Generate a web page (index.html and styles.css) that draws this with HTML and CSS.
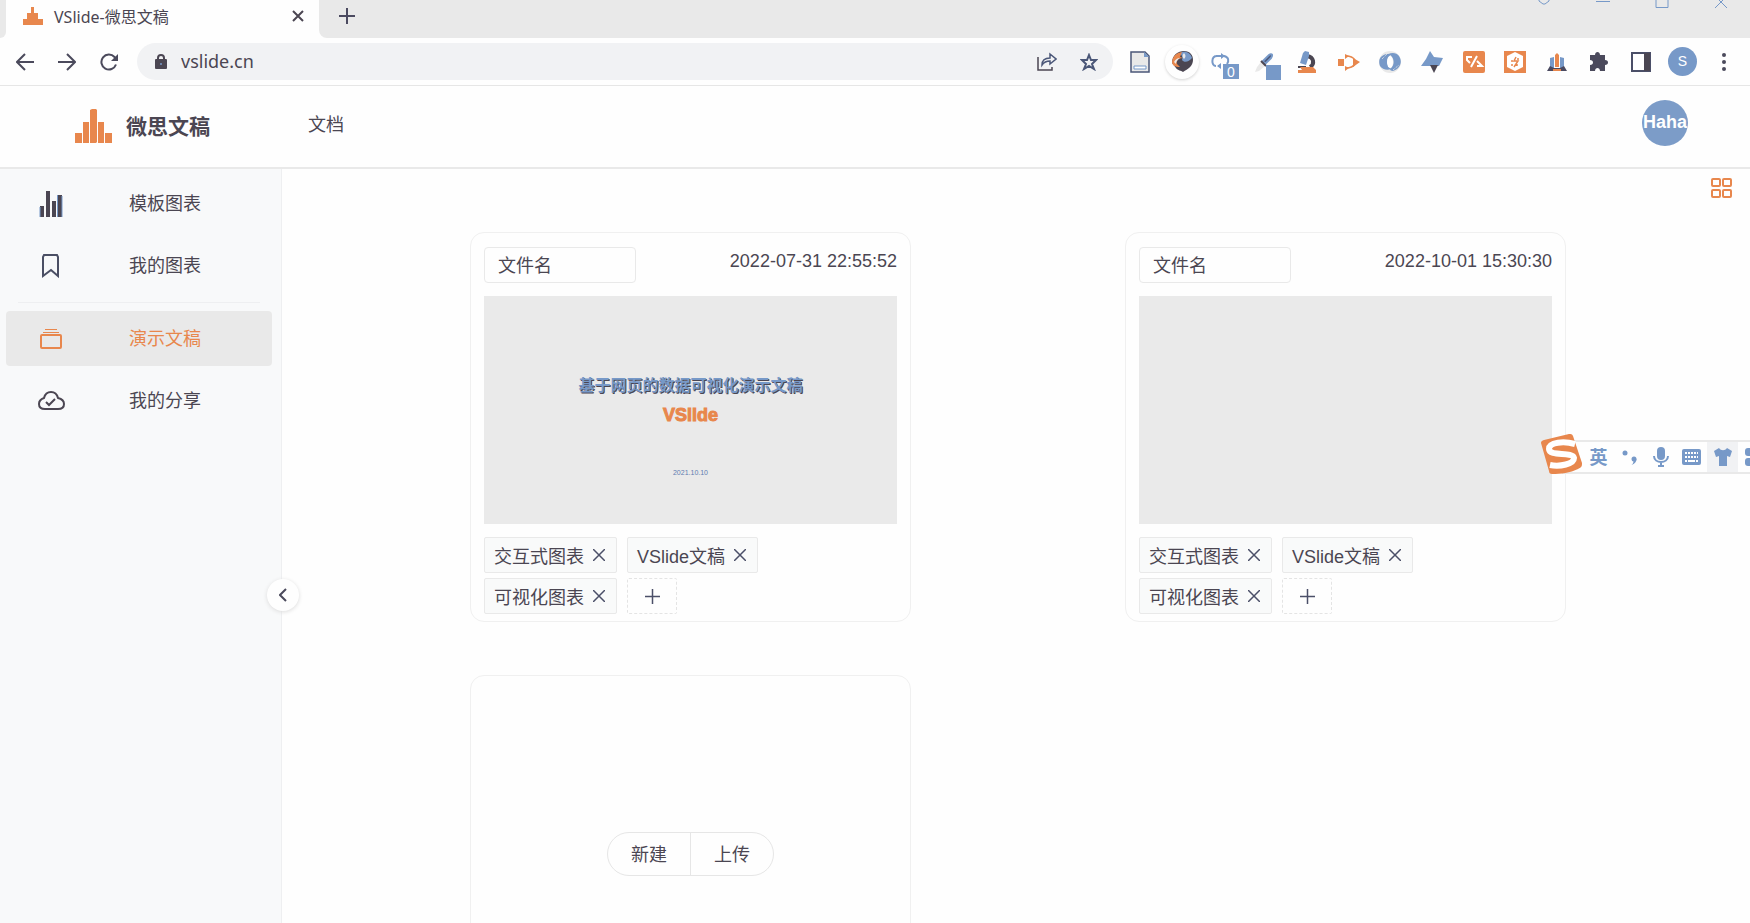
FILE: index.html
```html
<!DOCTYPE html>
<html lang="zh-CN">
  <head>
    <meta charset="UTF-8" />
    <meta name="viewport" content="width=device-width, initial-scale=1.0" />
    <title>VSlide-微思文稿</title>
    <link rel="stylesheet" href="styles.css">
  </head>
  <body>
    <!-- browser bar -->
    <div class="browser">
      <div class="tab-strip">
        <div class="strip-left"></div>
        <div class="tab">
          <svg class="tab-icon" width="20" height="18" viewBox="0 0 20 18" fill="#e8874d">
            <path d="M0 12h4V6h4V0h3v6h4v6h5v6H0z" />
          </svg>
          <span class="tab-title">VSlide-微思文稿</span>
          <button class="icon-button" aria-label="关闭标签页">
            <svg width="12" height="12" viewBox="0 0 12 12" fill="none" stroke="#4b4652" stroke-width="2"><path d="M1 1l10 10M11 1L1 11" /></svg>
          </button>
        </div>
        <div class="strip-right">
          <button class="icon-button" aria-label="新标签页">
            <svg width="16" height="16" viewBox="0 0 16 16" fill="none" stroke="#4b4a60" stroke-width="2"><path d="M8 0v16M0 8h16" /></svg>
          </button>
          <div class="window-controls">
            <button class="icon-button" aria-label="搜索标签页">
              <svg width="14" height="8" viewBox="0 0 14 8" fill="none" stroke="#7799c8"><path d="M2 0v1l4 3h2l4-3V0" /></svg>
            </button>
            <button class="icon-button" aria-label="最小化">
              <svg width="14" height="8" viewBox="0 0 14 8" fill="none" stroke="#7799c8"><path d="M0 1.500h14" /></svg>
            </button>
            <button class="icon-button" aria-label="最大化">
              <svg width="14" height="8" viewBox="0 0 14 8" fill="none" stroke="#7799c8"><path d="M1 0v7.500h12V0" /></svg>
            </button>
            <button class="icon-button" aria-label="关闭">
              <svg width="14" height="8" viewBox="0 0 14 8" fill="none" stroke="#7799c8"><path d="M5 0l8 8M9 0L1 8" /></svg>
            </button>
          </div>
        </div>
      </div>

      <div class="toolbar">
        <div class="nav-buttons">
          <button class="icon-button" aria-label="后退">
            <svg width="18" height="18" viewBox="0 0 18 18" fill="none" stroke="#4b4a5c" stroke-width="2"><path d="M18 9H2M9 1L1 9l8 8" /></svg>
          </button>
          <button class="icon-button" aria-label="前进">
            <svg width="18" height="18" viewBox="0 0 18 18" fill="none" stroke="#4b4a5c" stroke-width="2"><path d="M0 9h16M9 1l8 8-8 8" /></svg>
          </button>
          <button class="icon-button" aria-label="刷新">
            <svg width="18" height="18" viewBox="0 0 18 18" fill="none" stroke="#4b4a5c" stroke-width="2"><path d="M16 11.500A7.500 7.500 0 1 1 14.500 4L17 6.500" /><path d="M18 1v7h-7z" fill="#4b4a5c" stroke="none" /></svg>
          </button>
        </div>

        <div class="address">
          <svg width="12" height="15" viewBox="0 0 12 15"><path d="M3 6V4a3 3 0 0 1 6 0v2" fill="none" stroke="#4b4652" stroke-width="2" /><rect y="5" width="12" height="10" rx="1" fill="#4b4652" /><circle cx="6" cy="10" r="1" fill="#7799c8" /></svg>
          <input class="address-input" type="text" value="vslide.cn" aria-label="地址" />
          <button class="icon-button" aria-label="分享">
            <svg width="20" height="19" viewBox="0 0 20 19" fill="none" stroke="#4b4652" stroke-width="1.500"><path d="M1 5v13h14v-3" /><path d="M5 13c0-5 3-7 8-7V2l6 5-6 5V9c-4 0-6 1-8 4z" stroke="#4b5778" /></svg>
          </button>
          <button class="icon-button" aria-label="收藏">
            <svg width="18" height="18" viewBox="0 0 18 18" fill="none" stroke="#4b5778" stroke-width="2"><path d="M9 2l2 5h5l-4 4 2 5-5-3-5 3 2-5-4-4h5z" /></svg>
          </button>
        </div>

        <div class="extensions">
          <button class="icon-button" aria-label="阅读">
            <svg width="20" height="22" viewBox="0 0 20 22"><path d="M1 1h14l4 4v16H1z" fill="#e9e9e9" stroke="#4b5778" stroke-width="1.500" /><path d="M4 15h12v3H4z" fill="#fff" stroke="#7799c8" /><path d="M14 1l5 5h-5z" fill="#7799c8" /></svg>
          </button>
          <button class="icon-button round" aria-label="球">
            <svg width="22" height="21" viewBox="0 0 22 21"><path d="M1 12C1 4 7 0 13 0c6 0 9 4 9 9 0 6-5 9-10 12-2-2-5-1-7-4z" fill="#4b4652" /><path d="M9 2c5-3 11 0 12 5-3 4-8 5-10 2 1-3 0-4-2-7z" fill="#7799c8" /><path d="M1 11c1-7 5-9 10-10L9 6l3 1c-5 0-7 3-6 6l3 3c-5 0-8-2-8-5z" fill="#e8874d" /><path d="M13 2c2 2 2 4 0 6-2-2-2-4 0-6zM3 11c1-2 3-4 6-4-3 2-4 4-4 6z" fill="#e9e9e9" /></svg>
          </button>
          <button class="icon-button" aria-label="循环">
            <svg width="36" height="36" viewBox="-6 -8 36 36"><path d="M6 4C0 4 0 14 5 14M5 4h8c5 1 5 5 3 8M7 14h3" fill="none" stroke="#7799c8" stroke-width="2" /><path d="M10 1v6l4-3zM10 11v6l-4-3z" fill="#7799c8" /><path d="M12 12h16v15H12z" fill="#7799c8" /><text x="20" y="25" text-anchor="middle" font-size="14" fill="#fff">0</text></svg>
          </button>
          <button class="icon-button" aria-label="取色">
            <svg width="34" height="36" viewBox="-6 -8 34 36"><path d="M9 9l6-6c3-2 4 0 2 3l-6 6z" fill="#4b5778" stroke="#7799c8" stroke-width="2" /><path d="M7 10l4 4-6 5-4 1 2-5z" fill="#e9e9e9" /><path d="M7 9l5 5" stroke="#4b4652" stroke-width="2" /><path d="M12 13h15v15H12z" fill="#7799c8" /></svg>
          </button>
          <button class="icon-button" aria-label="显微镜">
            <svg width="20" height="22" viewBox="0 0 20 22"><path d="M10 5c7 1 8 8 3 11" fill="none" stroke="#4b4652" stroke-width="4" /><path d="M6 2l2-2 4 1v4L9 14 3 12z" fill="#7799c8" /><path d="M1 15h8v2H1z" fill="#4b4652" /><path d="M3 16h13l3 3v3H1v-3h4z" fill="#e8874d" /></svg>
          </button>
          <button class="icon-button" aria-label="流程">
            <svg width="22" height="18" viewBox="0 0 22 18"><path d="M0 6h6v7H0zM15 5l7 4-7 5zM7 1l4 2-4 3zM7 13l4 2-4 3z" fill="#e8874d" /><path d="M8 3c4 0 7 1 9 4M8 15c4 0 7-1 9-4" fill="none" stroke="#e8874d" stroke-width="1.500" /></svg>
          </button>
          <button class="icon-button" aria-label="代理">
            <svg width="22" height="22" viewBox="0 0 22 22"><circle cx="11" cy="11" r="11" fill="#e9e9e9" /><path d="M1 15C-2 7 4 2 13 3c-5 2-7 10-1 15-4 2-9 0-11-3z" fill="#7799c8" /><path d="M20 5c4 6 1 13-6 15-2 0-3-1-3-2 5-4 5-11-1-15 3-2 8-1 10 2z" fill="#7799c8" /><path d="M3 8l5-5M14 19l6-5" stroke="#e9e9e9" stroke-dasharray="1 1" /><ellipse cx="11" cy="11" rx="3" ry="6" fill="#fff" /></svg>
          </button>
          <button class="icon-button" aria-label="星标">
            <svg width="22" height="22" viewBox="0 0 22 22"><path d="M9 0l4 6 9 1-4 8H0l5-7z" fill="#7799c8" /><path d="M9 14h8l-4 8z" fill="#4b4652" /></svg>
          </button>
          <button class="icon-button" aria-label="代码">
            <svg width="22" height="22" viewBox="0 0 22 22"><rect width="22" height="22" rx="2" fill="#e8874d" /><path d="M9 6H4v3l3 3M14 5L8 16M14 10l5 5h-5" fill="none" stroke="#fff" stroke-width="2" /></svg>
          </button>
          <button class="icon-button" aria-label="六边形">
            <svg width="22" height="22" viewBox="0 0 22 22"><path d="M0 0h22v22H0z" fill="#e8874d" /><path d="M11 1l8 4v11l-8 4-8-4V5z" fill="#fff" /><path d="M12 6l-2 4h4l-4 6M8 9v2M8 13v2M14 7v2M13 13v2" fill="none" stroke="#e8874d" stroke-width="1.500" /></svg>
          </button>
          <button class="icon-button" aria-label="图表">
            <svg width="20" height="18" viewBox="0 0 20 18"><path d="M3 5l4-1v12H3zM13 4l4 1v11h-4z" fill="#7799c8" /><path d="M0 18l3-5 4 2h6l4-2 3 5z" fill="#4b4a60" /><path d="M8 2l2-2 2 2v12H8zM6 16h8v2H6z" fill="#e8874d" /></svg>
          </button>
          <button class="icon-button" aria-label="扩展程序">
            <svg width="20" height="20" viewBox="0 0 20 20"><path d="M1 3h5c0-4 5-4 5 0h5v5c4 0 4 5 0 5v6h-5c0-4-5-4-5 0H1v-6c4 0 4-5 0-5z" fill="#4b4a5c" /></svg>
          </button>
          <button class="icon-button" aria-label="侧边栏">
            <svg width="20" height="20" viewBox="0 0 20 20"><path d="M1 1h18v18H1z" fill="#fff" stroke="#4b4f68" stroke-width="2" /><path d="M13 1h6v18h-6z" fill="#4b4652" /></svg>
          </button>
          <button class="icon-button" aria-label="账户">
            <span class="account">S</span>
          </button>
          <button class="icon-button" aria-label="菜单">
            <svg width="4" height="18" viewBox="0 0 4 18" fill="#4b4a5c"><circle cx="2" cy="2" r="2" /><circle cx="2" cy="9" r="2" /><circle cx="2" cy="16" r="2" /></svg>
          </button>
        </div>
      </div>
    </div>

    <header class="header">
      <a class="brand" href="#">
        <svg width="37" height="34" viewBox="0 0 37 34" fill="#e8874d"><path d="M0 24h7v10H0zM8 13h6v21H8zM15 1l2-1h4l1 1v32l-1 1h-6zM23 13h6v21h-6zM30 24h7v10h-7z" /></svg>
        <span>微思文稿</span>
      </a>
      <a class="header-link" href="#">文档</a>
      <button class="avatar">Haha</button>
    </header>

    <div class="layout">
      <nav class="sidebar">
        <a class="side-item" href="#">
          <svg width="28" height="26" viewBox="0 0 28 26" fill="#4b4652"><path d="M3 15h4v11H3zM9 0h4v26H9zM15 10h4v16h-4zM21 4h4v22h-4z" /><path d="M3 16v10M20.500 4v22M25 5v21" stroke="#7799c8" /></svg>
          <span>模板图表</span>
        </a>
        <a class="side-item" href="#">
          <svg width="28" height="24" viewBox="0 0 28 24" fill="none" stroke="#4b4f64" stroke-width="2"><path d="M6 22V3l1-2h13l1 2v19l-7-6z" /></svg>
          <span>我的图表</span>
        </a>
        <hr class="side-line" />
        <a class="side-item active" href="#">
          <svg width="28" height="20" viewBox="0 0 28 20" fill="none" stroke="#e8874d" stroke-width="2"><path d="M8 .500h12M6 3.500h16" stroke-width="1" /><rect x="4" y="6" width="20" height="13" rx="1" /></svg>
          <span>演示文稿</span>
        </a>
        <a class="side-item" href="#">
          <svg width="28" height="20" viewBox="0 0 28 20" fill="none" stroke="#4b4652" stroke-width="2"><path d="M8 18C3 18 2 16 2 13c0-3 2-5 5-6 1-4 4-6 7-6s6 2 7 6c4 1 6 3 6 6 0 3-2 5-6 5z" /><path d="M9 11l3 3 6-6" /></svg>
          <span>我的分享</span>
        </a>
        <button class="collapse" aria-label="收起">
          <svg width="8" height="14" viewBox="0 0 8 14" fill="none" stroke="#4b4a5c" stroke-width="2"><path d="M7 1L1 7l6 6" /></svg>
        </button>
      </nav>

      <main class="main">
        <div class="view-bar">
          <button class="icon-button" aria-label="网格视图">
            <svg width="21" height="20" viewBox="0 0 21 20" fill="none" stroke="#e8874d" stroke-width="2"><rect x="1" y="1" width="8" height="7" rx="1" /><rect x="12" y="1" width="8" height="7" rx="1" /><rect x="1" y="12" width="8" height="7" rx="1" /><rect x="12" y="12" width="8" height="7" rx="1" /></svg>
          </button>
        </div>

        <div class="cards">
          <section class="card">
            <div class="card-head">
              <input class="file-name" type="text" value="文件名" aria-label="文件名" />
              <time>2022-07-31 22:55:52</time>
            </div>
            <div class="preview">
              <h2>基于网页的数据可视化演示文稿</h2>
              <p class="preview-name">VSlide</p>
              <p class="preview-date">2021.10.10</p>
            </div>
            <div class="tags">
              <span class="tag">交互式图表<button class="icon-button" aria-label="删除"><svg width="12" height="12" viewBox="0 0 12 12"><path d="M0 0l12 12M12 0L0 12" /></svg></button></span>
              <span class="tag">VSlide文稿<button class="icon-button" aria-label="删除"><svg width="12" height="12" viewBox="0 0 12 12"><path d="M0 0l12 12M12 0L0 12" /></svg></button></span>
              <span class="tag">可视化图表<button class="icon-button" aria-label="删除"><svg width="12" height="12" viewBox="0 0 12 12"><path d="M0 0l12 12M12 0L0 12" /></svg></button></span>
              <button class="tag-add" aria-label="添加标签"><svg width="15" height="15" viewBox="0 0 15 15"><path d="M7.500 0v15M0 7.500h15" /></svg></button>
            </div>
          </section>

          <section class="card">
            <div class="card-head">
              <input class="file-name" type="text" value="文件名" aria-label="文件名" />
              <time>2022-10-01 15:30:30</time>
            </div>
            <div class="preview"></div>
            <div class="tags">
              <span class="tag">交互式图表<button class="icon-button" aria-label="删除"><svg width="12" height="12" viewBox="0 0 12 12"><path d="M0 0l12 12M12 0L0 12" /></svg></button></span>
              <span class="tag">VSlide文稿<button class="icon-button" aria-label="删除"><svg width="12" height="12" viewBox="0 0 12 12"><path d="M0 0l12 12M12 0L0 12" /></svg></button></span>
              <span class="tag">可视化图表<button class="icon-button" aria-label="删除"><svg width="12" height="12" viewBox="0 0 12 12"><path d="M0 0l12 12M12 0L0 12" /></svg></button></span>
              <button class="tag-add" aria-label="添加标签"><svg width="15" height="15" viewBox="0 0 15 15"><path d="M7.500 0v15M0 7.500h15" /></svg></button>
            </div>
          </section>

          <section class="card card-new">
            <div class="button-group">
              <button>新建</button>
              <button>上传</button>
            </div>
          </section>
        </div>
      </main>
    </div>

    <!-- input method bar -->
    <div class="ime">
      <svg class="ime-logo" width="41" height="40" viewBox="0 0 41 40"><path d="M0 9c0-2 1-2 3-3l25-6c2 0 3 0 4 2l9 27c0 3 0 4-4 6-8 4-17 5-26 5-2 0-3-1-3-3z" fill="#e8874d" /><path d="M34 10C23 7 8 8 8 15c0 8 24 2 25 9 0 6-14 9-24 7" fill="none" stroke="#fff" stroke-width="6" /></svg>
      <div class="ime-keys">
        <button class="ime-lang">英</button>
        <button aria-label="标点"><svg width="16" height="16" viewBox="0 0 16 16" fill="#7799c8"><circle cx="3" cy="4" r="2.500" /><circle cx="12" cy="10" r="2.500" /><path d="M14.500 10c0 3-2 5-5 6 1-1 2-2 2-4z" /></svg></button>
        <button aria-label="语音"><svg width="16" height="20" viewBox="0 0 16 20"><rect x="4" width="8" height="13" rx="4" fill="#7799c8" /><path d="M1 9c0 8 14 8 14 0M8 15v4M5 19h6" fill="none" stroke="#7799c8" stroke-width="2" /></svg></button>
        <button aria-label="键盘"><svg width="19" height="16" viewBox="0 0 19 16"><rect width="19" height="16" rx="2" fill="#7799c8" /><path d="M3 4h13M3 8h13" stroke="#fff" stroke-width="2" stroke-dasharray="2 1" /><path d="M3 12h2M6 12h7M14 12h2" stroke="#fff" stroke-width="2" /></svg></button>
        <button class="ime-skin" aria-label="皮肤"><svg width="18" height="18" viewBox="0 0 18 18" fill="#7799c8"><path d="M5 0c2 3 6 3 8 0l5 3-2 6-3-1v10H5V8L2 9 0 3z" /></svg></button>
        <button aria-label="工具"><svg width="18" height="18" viewBox="0 0 18 18" fill="#7799c8"><rect width="8" height="8" rx="3" /><rect x="10" width="8" height="8" rx="3" /><rect y="10" width="8" height="8" rx="3" /><rect x="10" y="10" width="8" height="8" rx="3" /></svg></button>
      </div>
    </div>
  </body>
</html>
```

FILE: styles.css
```css
* {
  box-sizing: border-box;
}

body {
  margin: 0;
  height: 100vh;
  display: flex;
  flex-direction: column;
  overflow: hidden;
  background-color: #fefefe;
  color: #4b4652;
  font-family: "Liberation Sans", "Noto Sans CJK SC", sans-serif;
  font-size: 18px;
}

a {
  color: inherit;
  text-decoration: none;
}

button,
input {
  margin: 0;
  padding: 0;
  border: none;
  background: none;
  color: inherit;
  font: inherit;
}

svg {
  display: block;
}

.icon-button {
  display: flex;
  align-items: center;
  justify-content: center;
}

/* browser bar */
.browser {
  border-bottom: 1px solid #e6e6e6;
}

.tab-strip {
  display: flex;
  height: 38px;
}

.strip-left {
  width: 6px;
  background-color: #e9e9e9;
  border-bottom-right-radius: 6px;
}

.tab {
  display: flex;
  align-items: center;
  width: 313px;
  padding: 0 15px 6px 17px;
  font-family: "Noto Sans", "Noto Sans CJK SC", sans-serif;
  font-size: 16px;
}

.tab-title {
  flex: 1;
  padding-left: 11px;
}

.strip-right {
  flex: 1;
  display: flex;
  justify-content: space-between;
  padding-left: 20px;
  background-color: #e9e9e9;
  border-bottom-left-radius: 8px;
}

.strip-right > .icon-button {
  padding-bottom: 6px;
}

.window-controls {
  display: flex;
  align-items: flex-start;
}

.window-controls .icon-button {
  width: 59px;
}

.toolbar {
  display: flex;
  align-items: center;
  height: 47px;
  padding: 0 5px 0 4px;
}

.nav-buttons {
  display: flex;
}

.nav-buttons .icon-button {
  width: 42px;
  height: 36px;
}

.address {
  flex: 1;
  display: flex;
  align-items: center;
  height: 37px;
  margin: 0 6px 0 7px;
  padding: 0 3px 0 18px;
  border-radius: 20px;
  background-color: #f1f2f4;
}

.address-input {
  flex: 1;
  min-width: 0;
  padding: 0 0 2px 14px;
  font-family: "Noto Sans", "Noto Sans CJK SC", sans-serif;
}

.address .icon-button {
  width: 42px;
}

.extensions {
  display: grid;
  grid-template-columns: repeat(15, 1fr);
  align-items: center;
  justify-items: center;
  width: 626px;
}

.round {
  width: 34px;
  height: 34px;
  border-radius: 50%;
  box-shadow: 0 1px 3px #d4d4d4;
}

.account {
  width: 29px;
  height: 29px;
  border-radius: 50%;
  background-color: #7799c8;
  color: #fff;
  font-size: 14px;
  line-height: 29px;
}

/* header */
.header {
  display: flex;
  align-items: center;
  height: 83px;
  padding: 0 62px 8px 75px;
  border-bottom: 2px solid #e9e9e9;
}

.brand {
  display: flex;
  align-items: center;
  gap: 14px;
  padding-top: 7px;
  font-size: 21px;
  font-weight: bold;
}

.brand span {
  padding-bottom: 3px;
}

.header-link {
  flex: 1;
  margin-left: 98px;
}

.avatar {
  width: 46px;
  height: 46px;
  border-radius: 50%;
  background-color: #7c9cc8;
  color: #fff;
  font-size: 18px;
  font-weight: bold;
}

/* layout */
.layout {
  flex: 1;
  display: flex;
  min-height: 0;
}

.sidebar {
  position: relative;
  width: 282px;
  padding: 7px 9px 0 6px;
  background-color: #f8f9fa;
  border-right: 1px solid #eeeff1;
}

.side-item {
  display: flex;
  align-items: center;
  gap: 64px;
  height: 55px;
  margin-bottom: 7px;
  padding-left: 31px;
  border-radius: 4px;
}

.side-item span {
  padding-bottom: 3px;
}

.side-item.active {
  background-color: #e9e9e9;
  color: #e8874d;
}

.side-line {
  height: 1px;
  margin: 9px 12px 8px;
  border: none;
  background-color: #eeeff1;
}

.collapse {
  position: absolute;
  right: -18px;
  top: 410px;
  display: flex;
  align-items: center;
  justify-content: center;
  width: 32px;
  height: 32px;
  border-radius: 50%;
  background-color: #fefefe;
  box-shadow: 0 1px 4px #dcdcdc;
}

.main {
  flex: 1;
  min-width: 0;
  overflow: hidden;
}

.view-bar {
  display: flex;
  justify-content: flex-end;
  padding: 9px 18px 0;
}

.cards {
  display: grid;
  grid-template-columns: 1fr 1fr;
  justify-items: center;
  row-gap: 53px;
  padding: 34px 77px 53px 81px;
}

.card {
  width: 441px;
  max-width: 100%;
  padding: 14px 13px 7px;
  border: 1px solid #f0f0f0;
  border-radius: 14px;
}

.card-head {
  display: flex;
  justify-content: space-between;
  line-height: 28px;
}

.file-name {
  width: 152px;
  height: 36px;
  padding: 0 13px 2px;
  border: 1px solid #e9e9e9;
  border-radius: 4px;
}

.preview {
  height: 228px;
  margin: 13px 0;
  padding-top: 78px;
  background-color: #eaeaea;
  text-align: center;
}

.preview h2 {
  margin: 0;
  color: #7799c8;
  font-size: 16px;
  line-height: 24px;
  text-shadow: 1px 1px 0 #4b4652;
}

.preview p {
  margin: 0;
}

.preview-name {
  padding-top: 5px;
  color: #e8874d;
  font-size: 18px;
  font-weight: bold;
  line-height: 24px;
  -webkit-text-stroke: 1px #e8874d;
}

.preview-date {
  padding-top: 40px;
  color: #5f7cb0;
  font-size: 7px;
  line-height: 12px;
}

.tags {
  display: flex;
  flex-wrap: wrap;
  gap: 5px 10px;
}

.tag {
  display: flex;
  align-items: center;
  gap: 9px;
  height: 36px;
  padding: 0 11px 1px 9px;
  border: 1px solid #e9e9e9;
  border-radius: 2px;
  background-color: #f9fafa;
}

.tag svg,
.tag-add svg {
  fill: none;
  stroke: #4b4f68;
  stroke-width: 1.5px;
}

.tag-add {
  display: flex;
  align-items: center;
  justify-content: center;
  width: 50px;
  height: 36px;
  border: 1px dashed #e4e4e4;
  border-radius: 2px;
}

.card-new {
  display: flex;
  align-items: center;
  justify-content: center;
  height: 350px;
}

.button-group {
  display: flex;
  border: 1px solid #e6e6e6;
  border-radius: 22px;
}

.button-group button {
  width: 82px;
  height: 42px;
  padding-bottom: 2px;
}

.button-group button + button {
  width: 83px;
  border-left: 1px solid #e6e6e6;
}

/* input method bar */
.ime {
  position: fixed;
  top: 434px;
  right: -19px;
  display: flex;
  align-items: flex-end;
}

.ime-logo {
  z-index: 1;
}

.ime-keys {
  display: flex;
  height: 34px;
  margin-left: -20px;
  padding-left: 21px;
  border: solid #e9e9e9;
  border-width: 2px 0;
  background-color: #fefefe;
}

.ime-keys button {
  display: flex;
  align-items: center;
  justify-content: center;
  width: 31px;
}

.ime-keys .ime-lang {
  padding-bottom: 2px;
  color: #7799c8;
  font-weight: bold;
}

.ime-skin {
  background-color: #f1f2f4;
}
```
